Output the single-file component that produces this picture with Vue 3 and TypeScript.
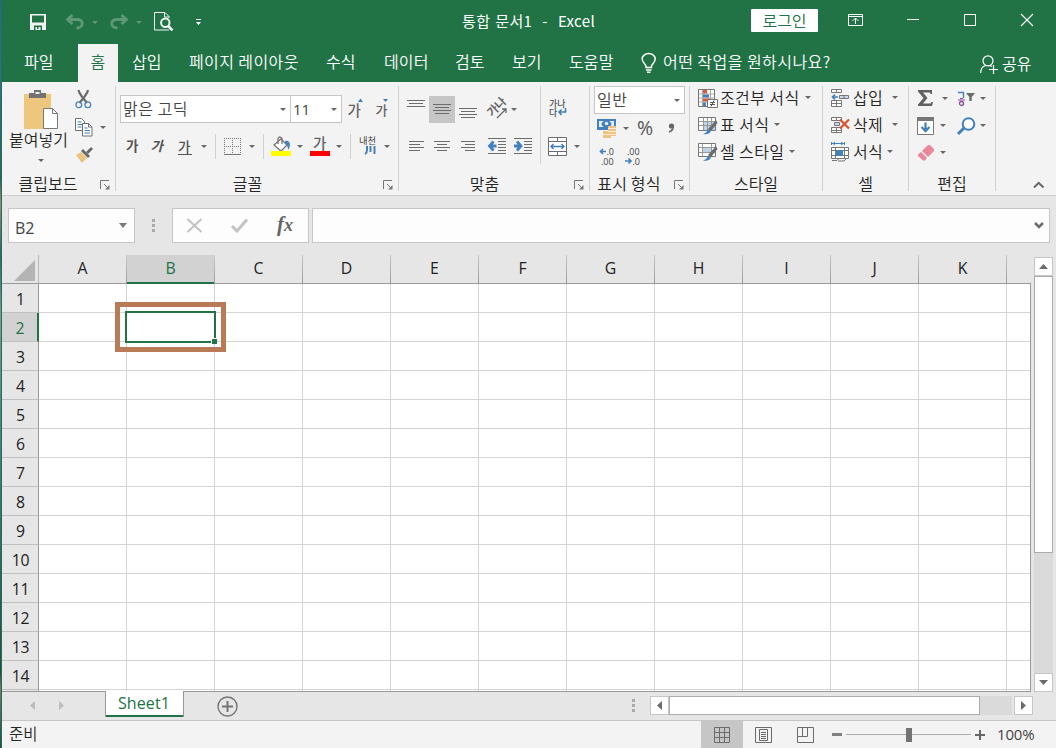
<script setup lang="ts">
const columns: string[] = ['A', 'B', 'C', 'D', 'E', 'F', 'G', 'H', 'I', 'J', 'K']
const rows: number[] = Array.from({ length: 14 }, (_, i) => i + 1)
const active = { col: 'B', row: 2 }
const zoomLevel = '100%'
</script>

<template>
  <div class="desktop">
    <div class="window">
      <header class="titlebar">
        <div class="quick">
          <svg width="16" height="16" viewBox="0 0 16 16"><path d="M0 0h16v16H0z" fill="#f0f3f1" /><path d="M2 1.5h12v7H2zM4 11.500h8V16H4z" fill="#217346" /><path d="M5.500 13h5v3h-5z" fill="#f0f3f1" /><path d="M7 13h1.500v2H7z" fill="#217346" /></svg>
          <svg width="18" height="16" viewBox="0 0 18 16" fill="none" stroke="#5e9877" stroke-width="2.8"><path d="M6.5 1 1.5 5.5l5 4.5M2 5.5h9.5c6.500 0 6.500 8.500-1 8.500" /></svg>
          <i class="ar dim"></i>
          <svg width="18" height="16" viewBox="0 0 18 16" fill="none" stroke="#5e9877" stroke-width="2.8"><path d="m11.500 1 5 4.500-5 4.500M16 5.500H6.500c-6.500 0-6.500 8.500 1 8.500" /></svg>
          <i class="ar dim"></i>
          <svg width="20" height="20" viewBox="0 0 20 20" fill="none" stroke="#f2f5f3"><path d="M15 6V4.500L11 .5H.5v17.500H15" /><path d="M10.500.5V5H15" /><circle cx="11.300" cy="10.800" r="4.200" stroke-width="2" fill="#217346" /><path d="m14.300 14 4.200 4.300" stroke-width="2.600" /></svg>
          <svg width="5" height="6" viewBox="0 0 5 6"><path d="M0 0h5v1H0zM0 3h5L2.500 6z" fill="#fff" /></svg>
        </div>
        <div class="doc-title">통합 문서1&nbsp; -&nbsp; Excel</div>
        <button class="login">로그인</button>
        <div class="winctl">
          <svg width="15" height="12" viewBox="0 0 15 12" fill="none" stroke="#fff"><path d="M.5.5h14v11H.5zM.5 2.500h14M7.500 10V4.500M4.500 7l3-3 3 3" /></svg>
          <svg width="12" height="12" viewBox="0 0 12 12"><path d="M0 5h12v1H0z" fill="#fff" /></svg>
          <svg width="12" height="12" viewBox="0 0 12 12"><path d="M.5.5h11v11H.5z" stroke="#fff" fill="none" /></svg>
          <svg width="12" height="12" viewBox="0 0 12 12"><path d="m0 0 12 12M12 0 0 12" stroke="#fff" stroke-width="1.100" /></svg>
        </div>
      </header>

      <nav class="tabs">
        <span class="tab">파일</span>
        <span class="tab on">홈</span>
        <span class="tab">삽입</span>
        <span class="tab">페이지 레이아웃</span>
        <span class="tab">수식</span>
        <span class="tab">데이터</span>
        <span class="tab">검토</span>
        <span class="tab">보기</span>
        <span class="tab">도움말</span>
        <svg class="bulb" width="16" height="20" viewBox="0 0 16 20" fill="none" stroke="#fff" stroke-width="1.500"><path d="M5 14.500V13C4 10.500 1.200 9.500 1.200 6a6.300 5.400 0 0 1 13 0c0 3.500-2.700 4.500-3.700 7v1.500zM5 17h5.500M6 19.300h3.500" /></svg>
        <span class="tab tell">어떤 작업을 원하시나요?</span>
        <svg class="person" width="18" height="19" viewBox="0 0 18 19" fill="none" stroke="#fff" stroke-width="1.200"><circle cx="8" cy="5.800" r="5" /><path d="M.7 18c0-4 2.300-7 5.500-7.500M9.800 10.500l2 1M13.500 10v9M9 14.500h9" /></svg>
        <span class="tab share">공유</span>
      </nav>

      <section class="ribbon">
        <div class="group clipboard">
          <div class="body">
            <div class="paste">
              <svg width="36" height="40" viewBox="0 0 36 40"><path d="M1 5h27v35H1z" fill="#edc77e" /><path d="M6 4h5V1h7v3h5v5H6z" fill="#737373" /><path d="M12.500 3h4v2h-4z" fill="#f3f3f3" /><path d="M20.500 19.500h9l5 5v15h-14z" fill="#fff" stroke="#777" /><path d="M29.500 19.500v5h5" fill="none" stroke="#777" /></svg>
              <span class="k">붙여넣기</span>
              <i class="ar"></i>
            </div>
            <div class="clip-tools">
              <svg width="17" height="19" viewBox="0 0 17 19" fill="none"><path d="M3.500 0c1 5 5 8 8.500 13M13 0C12 5 8 8 4.500 13" stroke="#6b6b6b" stroke-width="2.200" /><circle cx="3.800" cy="14.800" r="2.900" stroke="#4a80b8" stroke-width="1.300" /><circle cx="12.800" cy="14.800" r="2.900" stroke="#4a80b8" stroke-width="1.300" /></svg><i></i>
              <svg width="18" height="19" viewBox="0 0 18 19" stroke="#6e6e6e"><path d="M.5.500h6l3 3v9h-9z" fill="#fff" /><path d="M2.500 4h4M2.500 6.500h5M2.500 9h4" stroke="#3f7dbb" /><path d="M7.500 5.500h6l3.500 3.500v9H7.500z" fill="#fff" /><path d="M13.500 5.500V9H17" fill="none" /><path d="M9.500 10h3M9.500 12.500h5.500M9.500 15h5.500" stroke="#3f7dbb" /></svg><i class="ar"></i>
              <svg width="18" height="17" viewBox="0 0 18 17"><path d="m1 8 5-3 6 6-5 5z" fill="#edc382" /><path d="m6 4 2-2 7 7-2 2z" fill="#686868" /><path d="m11 5 5-5 2 2-5 5z" fill="#686868" /></svg><i></i>
            </div>
          </div>
          <div class="label"><span>클립보드</span><svg class="launch" width="10" height="10" viewBox="0 0 10 10"><path d="M.5 9V.5H9M4 4l4.500 4.500" fill="none" stroke="#777" /><path d="M9.500 5v4.500H5z" fill="#777" /></svg></div>
        </div>

        <div class="group fontg">
          <div class="body">
            <div class="font-row1">
              <div class="combo name"><span class="k">맑은 고딕</span><i class="ar"></i></div>
              <div class="combo size"><span>11</span><i class="ar"></i></div>
              <svg width="17" height="22" viewBox="0 0 17 22"><text x="-.5" y="18" font-size="14.500" font-weight="500" fill="#636363">가</text><path d="M10 4h5l-2.500-3.500z" fill="#3f7dbb" /></svg>
              <svg width="15" height="22" viewBox="0 0 15 22"><text x="-.5" y="17" font-size="13" font-weight="500" fill="#636363">가</text><path d="M7 1h5L9.500 4z" fill="#3f7dbb" /></svg>
            </div>
            <div class="font-row2">
              <b class="ga">가</b><b class="ga it">가</b><b class="ga un">가</b><i class="ar"></i>
              <i class="vs"></i>
              <svg width="17" height="17" viewBox="0 0 17 17" fill="none" stroke="#777"><path d="M.5 0v16M8.500 0v16M16.500 0v16M0 .500h17M0 8.500h17" stroke-dasharray="1 1" /><path d="M0 16.500h17" /></svg><i class="ar"></i>
              <i class="vs"></i>
              <svg width="20" height="21" viewBox="0 0 20 21"><path d="m3 9 7-6 6 6-6 6z" fill="#fff" stroke="#777" stroke-width="1.300" /><path d="M7 8V2.500q1.500-3 4 0V8" fill="none" stroke="#777" stroke-width="1.300" /><path d="M14 5q5-1 5 4.500-1 4-2 4 0-4-3-6z" fill="#4a82ba" /><path d="M0 15h20v5H0z" fill="#ff0" /></svg><i class="ar"></i>
              <svg width="20" height="21" viewBox="0 0 20 21"><text x="3" y="13" font-size="14.500" font-weight="500" fill="#636363">가</text><path d="M0 15h20v5H0z" fill="red" /></svg><i class="ar"></i>
              <i class="vs"></i>
              <svg width="18" height="20" viewBox="0 0 18 20"><text x="0" y="8" font-size="9.300" fill="#444">내천</text><path d="M8 10v4q0 3-2 4M11.500 10v6M15.500 10v8" fill="none" stroke="#4a7fb5" stroke-width="2" /></svg><i class="ar"></i>
            </div>
          </div>
          <div class="label"><span>글꼴</span><svg class="launch" width="10" height="10" viewBox="0 0 10 10"><path d="M.5 9V.5H9M4 4l4.500 4.500" fill="none" stroke="#777" /><path d="M9.500 5v4.500H5z" fill="#777" /></svg></div>
        </div>

        <div class="group align">
          <div class="body align-body">
            <div class="align-left">
              <div class="align-row1">
                <svg width="18" height="28" viewBox="0 0 18 28"><path d="M0 5.500h18M2 8.500h14M0 11.500h18" stroke="#6c6c6c" /></svg>
                <svg class="sel" width="26" height="27" viewBox="0 0 26 27"><path d="M4 8.500h18M6 11.500h14M4 14.500h18M6 17.500h14" stroke="#6c6c6c" /></svg>
                <svg width="18" height="28" viewBox="0 0 18 28"><path d="M0 13.500h18M2 16.500h14M0 19.500h18M2 22.500h14" stroke="#6c6c6c" /></svg>
                <svg width="22" height="22" viewBox="0 0 22 22"><text transform="rotate(-45 9 10)" x="-1" y="13" font-size="11.500" font-weight="700" fill="#666">가나</text><path d="m9 20 9-9M14 11h4v4" fill="none" stroke="#666" stroke-width="1.300" /></svg><i class="ar"></i>
              </div>
              <div class="align-row2">
                <svg width="15" height="12" viewBox="0 0 15 12"><path d="M0 .5h15M0 3.500h11M0 6.500h15M0 9.500h11" stroke="#6c6c6c" /></svg>
                <svg width="16" height="12" viewBox="0 0 16 12"><path d="M0 .5h16M3 3.500h10M0 6.500h16M3 9.500h10" stroke="#6c6c6c" /></svg>
                <svg width="14" height="12" viewBox="0 0 14 12"><path d="M0 .5h14M4 3.500h10M0 6.500h14M4 9.500h10" stroke="#6c6c6c" /></svg>
                <svg width="18" height="17" viewBox="0 0 18 17" fill="none" stroke="#6c6c6c"><path d="M0 .5h18M10 3.500h8M10 6.500h8M10 9.500h8M10 12.500h8M0 15.500h18" /><path d="M8.500 8H1.500M5.500 3.500 1.500 8l4 4.500" stroke="#4480bd" stroke-width="2.800" /></svg>
                <svg width="18" height="17" viewBox="0 0 18 17" fill="none" stroke="#6c6c6c"><path d="M0 .5h18M10 3.500h8M10 6.500h8M10 9.500h8M10 12.500h8M0 15.500h18" /><path d="M0 8h7M3 3.500 7 8l-4 4.500" stroke="#4480bd" stroke-width="2.800" /></svg>
              </div>
            </div>
            <div class="align-right">
              <svg width="19" height="20" viewBox="0 0 19 20"><text x="1" y="7.500" font-size="9" font-weight="500" fill="#555">가나</text><text x="1" y="17" font-size="9" font-weight="500" fill="#555">다</text><path d="M17.500 9v4H11M13.500 10.500 11 13l2.500 3" fill="none" stroke="#3f7dbb" stroke-width="1.500" /></svg><i></i>
              <svg width="19" height="19" viewBox="0 0 19 19" fill="#fff" stroke="#6c6c6c"><path d="M.5.500h18v18H.5zM.5 4.500h18M.5 14.500h18M9.500 0v4.500M9.500 14.500V19" /><path d="M3 9.500h13M5.500 7 3 9.500 5.500 12M13.500 7l2.500 2.500-2.500 2.500" fill="none" stroke="#3f7dbb" stroke-width="1.400" /></svg><i class="ar"></i>
            </div>
          </div>
          <div class="label"><span>맞춤</span><svg class="launch" width="10" height="10" viewBox="0 0 10 10"><path d="M.5 9V.5H9M4 4l4.500 4.500" fill="none" stroke="#777" /><path d="M9.500 5v4.500H5z" fill="#777" /></svg></div>
        </div>

        <div class="group num">
          <div class="body">
            <div class="combo fmt"><span class="k">일반</span><i class="ar"></i></div>
            <div class="num-row1">
              <svg width="20" height="20" viewBox="0 0 20 20"><path d="M0 1h19v11H0z" fill="#4480bd" /><path d="M2 3h15v6H2z" fill="#e8eef5" /><ellipse cx="9.500" cy="6" rx="5" ry="3.500" fill="#4480bd" /><circle cx="9.500" cy="5.500" r="1.800" fill="#e8eef5" /><path d="M11 8h8v10H11zM6 13h8v7H6z" fill="#edc382" /><path d="M11 10.500h8M11 13.500h8M6 16.500h13" stroke="#f8ecd8" /></svg>
              <i class="ar"></i><span class="pct">%</span>
              <svg width="8" height="10" viewBox="0 0 8 10"><circle cx="3.500" cy="3" r="2.600" fill="#666" /><path d="M5 2q1 5-4 7" fill="none" stroke="#666" stroke-width="1.800" /></svg>
            </div>
            <div class="num-row2">
              <svg width="18" height="20" viewBox="0 0 18 20"><text class="lat" x="7.500" y="8" font-size="9" fill="#444">.0</text><text class="lat" x="2" y="17.500" font-size="9" fill="#444">.00</text><path d="M7 4.500H1.500M4 2 1.500 4.500 4 7" fill="none" stroke="#4480bd" stroke-width="1.700" /></svg>
              <svg width="18" height="20" viewBox="0 0 18 20"><text class="lat" x="2" y="8" font-size="9" fill="#444">.00</text><text class="lat" x="7.500" y="17.500" font-size="9" fill="#444">.0</text><path d="M0 14h5.500M3.500 11.500 6 14l-2.500 2.500" fill="none" stroke="#4480bd" stroke-width="1.700" /></svg>
            </div>
          </div>
          <div class="label"><span>표시 형식</span><svg class="launch" width="10" height="10" viewBox="0 0 10 10"><path d="M.5 9V.5H9M4 4l4.500 4.500" fill="none" stroke="#777" /><path d="M9.500 5v4.500H5z" fill="#777" /></svg></div>
        </div>

        <div class="group styles">
          <div class="body list">
            <div class="item">
              <svg width="20" height="20" viewBox="0 0 20 20"><path d="M.5 1.500h16v17H.5z" fill="#fff" stroke="#777" /><path d="M4.500 2v16M12.500 2v16M1 6h15M1 10h15M1 14h15" stroke="#aaa" /><path d="M5 2h4v3.500H5zM5 10.500h7v3H5z" fill="#d9593a" /><path d="M5 6.500h6v3H5zM5 14.500h3V18H5z" fill="#4480bd" /><path d="M9.500 11.500h10v8h-10z" fill="#fff" stroke="#777" /><path d="M12 14.500h5M12 16.500h5M13 18.500l3-6" stroke="#555" /></svg>
              <span class="k">조건부 서식</span><i class="ar"></i>
            </div>
            <div class="item">
              <svg width="20" height="20" viewBox="0 0 20 20"><path d="M.5 2.500h17v13H.5z" fill="#fff" stroke="#777" /><path d="M6 7h11v8H6z" fill="#bed3e8" /><path d="M5.500 3v12M9.500 3v12M13.500 3v12M1 6.500h16M1 10.500h16" stroke="#999" /><path d="m10 14 8-9 1.500 3L13 16z" fill="#6b6b6b" /><path d="M5 19q4-1 5-5l3 2q-2 4-8 3z" fill="#4480bd" /></svg>
              <span class="k">표 서식</span><i class="ar"></i>
            </div>
            <div class="item">
              <svg width="20" height="20" viewBox="0 0 20 20"><path d="M.5 1.500h17v13H.5z" fill="#fff" stroke="#777" /><path d="M4.500 2v12M13.500 2v12M1 5.500h16M1 10.500h16" stroke="#999" /><path d="M5 6h8v4H5z" fill="#bed3e8" /><path d="m10 13 8-9 1.500 3L13 15z" fill="#6b6b6b" /><path d="M5 18.500q4-1 5-5l3 2q-2 4-8 3z" fill="#4480bd" /></svg>
              <span class="k">셀 스타일</span><i class="ar"></i>
            </div>
          </div>
          <div class="label"><span>스타일</span></div>
        </div>

        <div class="group cells">
          <div class="body list">
            <div class="item wide">
              <svg width="19" height="20" viewBox="0 0 19 20" fill="#fff" stroke="#777"><path d="M.5 1.500h10v3H.5zM5.500 1.500v3M.5 12.500h10v6H.5zM.5 15.500h10M5.500 12.500v6" /><path d="M8.500 7.500h9v3h-9z" fill="#c9d9e9" /><path d="M13 7.500v3" /><path d="M7 9H1.500M4 6.500 1.500 9 4 11.500" fill="none" stroke="#4480bd" stroke-width="1.700" /></svg>
              <span class="k">삽입</span><i class="ar"></i>
            </div>
            <div class="item wide">
              <svg width="19" height="20" viewBox="0 0 19 20" fill="#fff" stroke="#777"><path d="M.5 2.500h10v3H.5zM5.500 2.500v3M.5 12.500h10v5H.5zM.5 15.500h10M5.500 12.500v5" /><path d="M3.500 7.500h5v3h-5z" fill="#c9d9e9" /><path d="m9 4.500 9 9M18 4.500l-9 9" stroke="#d9532c" stroke-width="2.200" /></svg>
              <span class="k">삭제</span><i class="ar"></i>
            </div>
            <div class="item">
              <svg width="19" height="20" viewBox="0 0 19 20" fill="#fff" stroke="#777"><path d="M.5 5.500h17v11H.5zM4.500 5.500v11M13.500 5.500v11M.5 8.500h17M.5 13.500h17" /><path d="M5 8h7v6H5z" fill="#4480bd" stroke="none" /><path d="M1 1.500h12M.5 0v3M13.500 0v3M4 0 2 1.500 4 3M10 0l2 1.500L10 3" fill="none" stroke="#4480bd" /><path d="M1 18.500h5l2-2M7 19h6l2-2" fill="none" /></svg>
              <span class="k">서식</span><i class="ar"></i>
            </div>
          </div>
          <div class="label"><span>셀</span></div>
        </div>

        <div class="group edit">
          <div class="body edit-grid">
            <svg width="17" height="17" viewBox="0 0 17 17"><path d="M1 0h14v4h-1.500L13 2.500H6L10.500 8 6 13.500h7.500L14.500 12H16l-1 4H1v-1.500L6.500 8 1 1.500z" fill="#606060" /></svg><i class="ar shift"></i>
            <svg width="18" height="19" viewBox="0 0 18 19"><path d="M1 3.500h5.500V9" fill="none" stroke="#4480bd" stroke-width="1.400" /><path d="M1 11h7M3 9.500h3" stroke="#8a4ba8" stroke-width="1.200" /><circle cx="4.500" cy="14.500" r="2" fill="none" stroke="#8a4ba8" stroke-width="1.300" /><path d="M9 4h9l-3.300 4v4h-2.400V8z" fill="#6b6b6b" /></svg><i class="ar"></i>
            <svg width="18" height="18" viewBox="0 0 18 18"><path d="M.5.500h16v17H.5z" fill="#fff" stroke="#777" /><path d="M0 0h17v4H0z" fill="#777" /><path d="M8.500 5.500V14M4.500 10l4 4 4-4" fill="none" stroke="#4480bd" stroke-width="2.300" /></svg><i class="ar"></i>
            <svg width="19" height="18" viewBox="0 0 19 18"><circle cx="11.500" cy="7" r="5.800" fill="#fff" stroke="#4480bd" stroke-width="2" /><path d="m7 11-6 6" stroke="#4480bd" stroke-width="3" /></svg><i class="ar"></i>
            <svg width="18" height="18" viewBox="0 0 18 18"><path d="m5 7 6-6h2l4 4v2l-6 6z" fill="#e8889a" /><path d="m4 8 6 6-2 2.500H6L1 12v-1.500z" fill="#e8889a" /></svg><i class="ar"></i>
          </div>
          <div class="label"><span>편집</span></div>
        </div>
        <svg class="collapse" width="12" height="8" viewBox="0 0 12 8"><path d="m1 6.500 4.700-4.700 4.800 4.700" fill="none" stroke="#666" stroke-width="2" /></svg>
      </section>

      <section class="formula">
        <div class="namebox"><span>B2</span><svg width="8" height="5" viewBox="0 0 8 5"><path d="M0 0h8L4 5z" fill="#7a7a7a" /></svg></div>
        <i class="dots"></i>
        <div class="fx">
          <svg width="17" height="15" viewBox="0 0 17 15"><path d="m1.500 1 14 13M15.500 1l-14 13" stroke="#c3c3c3" stroke-width="2" /></svg>
          <svg width="17" height="15" viewBox="0 0 17 15"><path d="m1 8 5 5L16 1.500" fill="none" stroke="#c3c3c3" stroke-width="3" /></svg>
          <span class="fxg">f<small>x</small></span>
        </div>
        <div class="input"><svg width="10" height="7" viewBox="0 0 10 7"><path d="m1 1 4 4 4-4" fill="none" stroke="#6b6b6b" stroke-width="2.600" /></svg></div>
      </section>

      <section class="sheet">
        <div class="grid">
          <div class="colheads">
            <div class="corner"><svg width="21" height="21" viewBox="0 0 21 21"><path d="M21 0v21H0z" fill="#b4b4b4" /></svg></div>
            <div v-for="c in columns" :key="c" class="ch" :class="{ on: c === active.col }">{{ c }}</div>
          </div>
          <div class="rowsarea">
            <div v-for="r in rows" :key="r" class="row">
              <div class="rh" :class="{ on: r === active.row }">{{ r }}</div>
              <div v-for="c in columns" :key="c" class="cell">
                <div v-if="r === active.row && c === active.col" class="callout"><div class="selection"><i></i></div></div>
              </div>
              <div class="cell rest"></div>
            </div>
            <div class="row sliver"><div class="rh"></div><div v-for="c in columns" :key="c" class="cell"></div><div class="cell rest"></div></div>
          </div>
        </div>
        <div class="vscroll">
          <div class="sbtn"><svg width="9" height="5" viewBox="0 0 9 5"><path d="M0 5h9L4.500 0z" fill="#6b6b6b" /></svg></div>
          <div class="vthumb"></div>
          <div class="vtrack"></div>
          <div class="sbtn"><svg width="9" height="5" viewBox="0 0 9 5"><path d="M0 0h9L4.500 5z" fill="#6b6b6b" /></svg></div>
        </div>
      </section>

      <section class="sheetbar">
        <div class="navs">
          <svg width="5" height="9" viewBox="0 0 5 9"><path d="M5 0v9L0 4.500z" fill="#bdbdbd" /></svg>
          <svg width="5" height="9" viewBox="0 0 5 9"><path d="M0 0v9l5-4.500z" fill="#bdbdbd" /></svg>
        </div>
        <div class="stab">Sheet1</div>
        <svg class="add" width="21" height="21" viewBox="0 0 21 21" fill="none" stroke="#747474"><circle cx="10.500" cy="10.500" r="9.500" stroke-width="1.400" /><path d="M10.500 5v11M5 10.500h11" stroke-width="2" /></svg>
        <i class="dots"></i>
        <div class="hscroll">
          <div class="sbtn"><svg width="5" height="9" viewBox="0 0 5 9"><path d="M5 0v9L0 4.500z" fill="#6b6b6b" /></svg></div>
          <div class="hthumb"></div>
          <div class="htrack"></div>
          <div class="sbtn"><svg width="5" height="9" viewBox="0 0 5 9"><path d="M0 0v9l5-4.500z" fill="#6b6b6b" /></svg></div>
        </div>
      </section>

      <footer class="status">
        <span class="ready">준비</span>
        <div class="view on"><svg width="16" height="16" viewBox="0 0 16 16" fill="none" stroke="#6b6b6b"><path d="M.5.500h15v15H.5zM5.500 0v16M10.500 0v16M0 5.500h16M0 10.500h16" /></svg></div>
        <div class="view"><svg width="17" height="16" viewBox="0 0 17 16" fill="none" stroke="#6b6b6b"><path d="M.5.500h16v15H.5zM4.500 2.500h8v11h-8zM6 5.500h5M6 7.500h5M6 9.500h5M6 11.500h5" /></svg></div>
        <div class="view"><svg width="17" height="16" viewBox="0 0 17 16" fill="none" stroke="#6b6b6b"><path d="M.5.500h16v15H.5zM.5 9.500h10v-9M5.500.500v9" /></svg></div>
        <div class="slider">
          <i class="minus"></i>
          <div class="rail"><i></i></div>
          <svg width="10" height="10" viewBox="0 0 10 10"><path d="M5 0v10M0 5h10" stroke="#666" stroke-width="2" /></svg>
        </div>
        <span class="zoom">{{ zoomLevel }}</span>
      </footer>
    </div>
  </div>
</template>

<style>
html, body { overflow: hidden; background: #e6e6e6; }
</style>

<style scoped>
* { box-sizing: border-box; }
svg { display: block; flex: none; overflow: visible; }
.desktop { width: 1056px; height: 748px; padding-left: 1px; background: linear-gradient(#2262a8, #2e6da4 10%, #345d75 24%, #9a8c84 27%, #345d86 34%, #7f98a8 42%, #4b7890 60%, #2b4858 90%, #777 92%, #26485a); font-family: "Open Sans", "Noto Sans CJK KR", sans-serif; font-size: 15px; color: #262626; overflow: hidden; }
.window { width: 1055px; height: 748px; border-left: 1px solid #217346; background: #e6e6e6; display: flex; flex-direction: column; }
.window text { font-family: "Noto Sans CJK KR", sans-serif; }
.window text.lat { font-family: "Open Sans", sans-serif; }
.k, .tab, .label, .ready, .login { font-family: "Noto Sans CJK KR", sans-serif; font-size: 16px; font-weight: 350; white-space: nowrap; }
.ar { width: 0; height: 0; border: 3.500px solid transparent; border-top: 3.500px solid #666; border-bottom: 0; flex: none; }
.ar.dim { border-top-color: #5e9877; }

.titlebar { height: 44px; flex: none; background: #217346; color: #fff; display: flex; align-items: center; }
.quick { width: 440px; padding-left: 28px; display: grid; grid-template-columns: 36px 26px 18px 26px 18px 42px 5px; align-items: center; }
.doc-title { width: 309px; padding-left: 20px; font-family: "Noto Sans CJK KR", sans-serif; font-size: 15px; letter-spacing: .35px; word-spacing: 1.3px; white-space: pre; padding-bottom: 3px; }
.login { width: 67px; height: 23px; margin: -4px 0 0; padding: 0; border: 0; border-radius: 1px; background: #fff; color: #217346; line-height: 20px; }
.winctl { padding: 0 0 4px 30px; display: grid; grid-template-columns: 59px 57px 57px 12px; align-items: center; }

.tabs { height: 38px; flex: none; background: #217346; color: #fff; display: flex; align-items: center; }
.tab { height: 38px; line-height: 34px; letter-spacing: .1px; flex: none; }
.tab:nth-child(1) { width: 76px; padding-left: 22px; }
.tab.on { width: 40px; background: #f3f3f3; color: #217346; text-align: center; }
.tab:nth-child(3) { width: 71px; padding-left: 14px; }
.tab:nth-child(4) { width: 137px; letter-spacing: .4px; }
.tab:nth-child(5) { width: 58px; }
.tab:nth-child(6) { width: 71px; }
.tab:nth-child(7) { width: 57px; }
.tab:nth-child(8) { width: 57px; }
.tab:nth-child(9) { width: 72px; }
.bulb { margin-right: 6px; }
.tell { width: 317px; letter-spacing: .45px; }
.person { margin: 2px 4px 0 0; }
.share { padding-top: 2px; }

.ribbon { height: 114px; flex: none; background: #f3f3f3; border-bottom: 1px solid #cfcfcf; display: flex; padding-top: 4px; }
.group { height: 105px; border-right: 1px solid #d2d2d2; display: flex; flex-direction: column; flex: none; }
.body { height: 87px; }
.label { height: 18px; display: flex; align-items: center; justify-content: center; }
.label span { flex: 1; text-align: center; line-height: 18px; padding-top: 3px; height: 22px; }
.launch { margin: 6px 5px 0 0; }
.clipboard { width: 114px; }
.clipboard .label span { padding-right: 6px; }
.fontg .label span, .align .label span { padding-right: 4px; }
.clipboard .body { display: flex; }
.paste { width: 70px; display: flex; flex-direction: column; align-items: center; padding: 3px 0 0 8px; }
.paste .k { line-height: 20px; margin: 0 0 10px -5px; }
.clip-tools { display: grid; grid-template-columns: 25px 7px; grid-auto-rows: 28px; align-items: center; padding: 0 0 0 3px; margin-top: -1px; }
.combo { background: #fff; border: 1px solid #c6c6c6; height: 28px; display: flex; justify-content: space-between; align-items: center; padding: 0 4px 0 2px; color: #444; }
.combo .k { line-height: 24px; padding-bottom: 2px; letter-spacing: .5px; }
.fontg { width: 283px; }
.font-row1 { display: grid; grid-template-columns: 170px 58px 28px 20px; padding: 9px 0 0 4px; align-items: center; }
.combo.name { width: 171px; }
.combo.size { width: 52px; }
.font-row2 { display: grid; grid-template-columns: 26px 26px 23px 14px 9px 25px 14px 8px 26px 13px 26px 14px 9px 25px 6px; padding-left: 10px; margin-right: -2px; height: 46px; align-items: center; }
.ga { font: 700 13.500px/16px "Noto Sans CJK KR", sans-serif; color: #555; margin-top: -2px; }
.ga.it { transform: skewX(-14deg); width: 14px; }
.ga.un { width: 14px; border-bottom: 1px solid #555; font-weight: 500; margin-top: 0; }
.vs { width: 1px; height: 25px; background: #d0d0d0; }
.align { width: 191px; }
.align-body { display: flex; }
.align-left { width: 142px; height: 78px; border-right: 1px solid #d2d2d2; }
.align-row1 { height: 46px; display: grid; grid-template-columns: 22px 30px 29px 23px 6px; padding: 0 0 0 8px; align-items: center; }
.sel { background: #c6c6c6; }
.align-row2 { height: 28px; display: grid; grid-template-columns: 25px 27px 27px 26px 18px; padding-left: 10px; align-items: center; }
.align-row2 svg:nth-child(-n + 3) { margin-top: 1px; }
.align-right { display: grid; grid-template-columns: 26px 6px; grid-template-rows: 41px 38px; align-items: center; padding: 0 0 0 7px; height: 81px; }
.align-right svg:first-child { margin-top: 4px; }
.num { width: 100px; }
.combo.fmt { width: 91px; margin-left: 4px; }
.num-row1 { display: grid; grid-template-columns: 26px 14px 31px 8px; padding: 0 0 0 7px; height: 28px; align-items: center; }
.pct { font-size: 19.500px; line-height: 24px; color: #555; }
.num-row2 { display: grid; grid-template-columns: 26px 18px; padding: 1px 0 0 9px; height: 28px; align-items: center; }
.num .label span { flex: none; margin: 0 13px 0 7px; letter-spacing: .2px; }
.styles { width: 133px; }
.styles .body { padding-left: 8px; }
.list { margin-top: -2px; height: 89px; }
.item { display: flex; height: 27px; align-items: center; }
.item .k { margin: 0 5px 0 2px; line-height: 24px; padding-bottom: 2px; letter-spacing: .4px; }
.cells { width: 86px; }
.cells .body { padding-left: 8px; }
.cells .item .k { margin: 0 4px 0 3px; }
.cells .item.wide .k { margin-right: 9px; }
.edit { width: 87px; }
.edit-grid { display: grid; grid-template-columns: 23px 17px 23px 6px; grid-template-rows: 27px 27px 27px; padding-left: 8px; align-items: center; align-content: start; margin-top: -1px; height: 88px; }
.shift { margin-left: 2px; }
.collapse { margin: 95px 0 0 37px; }

.formula { display: flex; height: 59px; flex: none; padding: 12px 0 0 6px; }
.namebox, .fx, .input { background: #fdfdfd; border: 1px solid #c6c6c6; height: 35px; display: flex; align-items: center; }
.namebox { width: 127px; padding: 0 7px 0 6px; justify-content: space-between; color: #444; }
.namebox span { padding-top: 5px; font-size: 16px; }
.dots { width: 3px; height: 13px; background: repeating-linear-gradient(#ababab 0 3px, transparent 3px 5px); flex: none; }
.formula .dots { margin: 11px 17px 0 17px; }
.fx { width: 137px; padding-left: 13px; }
.fx svg + svg { margin-left: 28px; }
.fxg { font: italic 700 21px/24px "Liberation Serif", serif; color: #666; margin-left: 29px; padding-bottom: 3px; }
.fxg small { font-size: 18px; }
.input { margin-left: 3px; width: 738px; justify-content: flex-end; padding-right: 5px; }

.sheet { height: 437px; flex: none; display: flex; }
.grid { width: 1029px; flex: none; height: 437px; }
.colheads { display: flex; height: 29px; border-bottom: 1px solid #999; }
.corner { width: 37px; padding: 5px 0 0 12px; border-right: 1px solid #b8b8b8; flex: none; height: 28px; }
.ch { width: 88px; flex: none; text-align: center; line-height: 26px; font-size: 15.800px; color: #222; border-right: 1px solid; border-image: linear-gradient(#ccc, #999) 1; }
.ch.on { background: #d2d2d2; color: #217346; height: 29px; box-shadow: inset 0 -2px #217346; }
.rowsarea { height: 408px; background: #fff; border: solid #999; border-width: 0 1px 1px 0; overflow: hidden; }
.row { display: flex; height: 29px; }
.rh { width: 37px; flex: none; background: #e6e6e6; border-right: 1px solid #999; border-bottom: 1px solid #c0c0c0; text-align: center; line-height: 30px; color: #222; font-size: 15.800px; letter-spacing: -.2px; padding-left: 1px; }
.rh.on { background: #d2d2d2; color: #217346; border-right: 2px solid #217346; }
.cell { position: relative; width: 88px; flex: none; border: solid #d4d4d4; border-width: 0 1px 1px 0; }
.cell.rest { width: 23px; border-right: 0; }
.sliver { height: 1px; }
.sliver .rh, .sliver .cell { border-bottom: 0; }
.callout { position: absolute; z-index: 2; left: -12px; top: -11px; width: 111px; height: 50px; border: 5px solid #b97a57; padding: 4px 5px; }
.selection { position: relative; width: 91px; height: 32px; border: 2px solid #217346; }
.selection i { position: absolute; right: -3px; bottom: -3px; width: 6px; height: 6px; background: #217346; border: solid #fff; border-width: 1px 0 0 1px; }
.vscroll { margin-left: 3px; width: 19px; height: 435px; margin-top: 2px; display: flex; flex-direction: column; }
.sbtn { width: 19px; height: 19px; flex: none; background: #fff; border: 1px solid #c6c6c6; display: flex; align-items: center; justify-content: center; }
.vthumb { height: 277px; background: #fff; border: 1px solid #ababab; }
.vtrack { flex: 1; background: #dadada; }

.sheetbar { height: 28px; flex: none; display: flex; }
.navs { width: 103px; padding: 9px 0 0 28px; display: flex; gap: 24px; }
.stab { width: 79px; height: 26px; margin-top: -1px; background: #fff; border: solid #999; border-width: 0 1px; box-shadow: inset 0 -2px #217346; color: #217346; text-align: center; line-height: 25px; font-size: 16px; letter-spacing: .1px; padding-right: 1px; }
.add { margin: 4px 0 0 33px; }
.sheetbar .dots { margin: 7px 15px 0 394px; }
.hscroll { display: flex; margin-top: 4px; width: 383px; height: 19px; }
.hthumb { width: 311px; background: #fff; border: 1px solid #ababab; flex: none; }
.htrack { width: 32px; background: #dadada; margin-right: 2px; }

.status { height: 28px; border-top: 1px solid #c6c6c6; background: #f3f3f3; display: flex; align-items: center; }
.ready { width: 699px; padding-left: 7px; line-height: 22px; padding-bottom: 4px; font-size: 15.500px; }
.view { width: 42px; height: 27px; flex: none; display: flex; align-items: center; justify-content: center; padding-right: 1px; }
.view.on { background: #c6c6c6; padding-right: 0; }
.slider { display: flex; align-items: center; margin-left: 5px; width: 154px; }
.minus { width: 10px; height: 3px; background: #808080; margin: -1px 4px 0 0; }
.rail { width: 125px; height: 14px; margin-right: 4px; background: linear-gradient(#ababab, #ababab) center / 100% 1px no-repeat; }
.rail i { display: block; width: 6px; height: 14px; margin-left: 60px; background: #737373; }
.zoom { margin: -1px 0 0 11px; font-size: 15px; letter-spacing: -.2px; color: #444; }
</style>
